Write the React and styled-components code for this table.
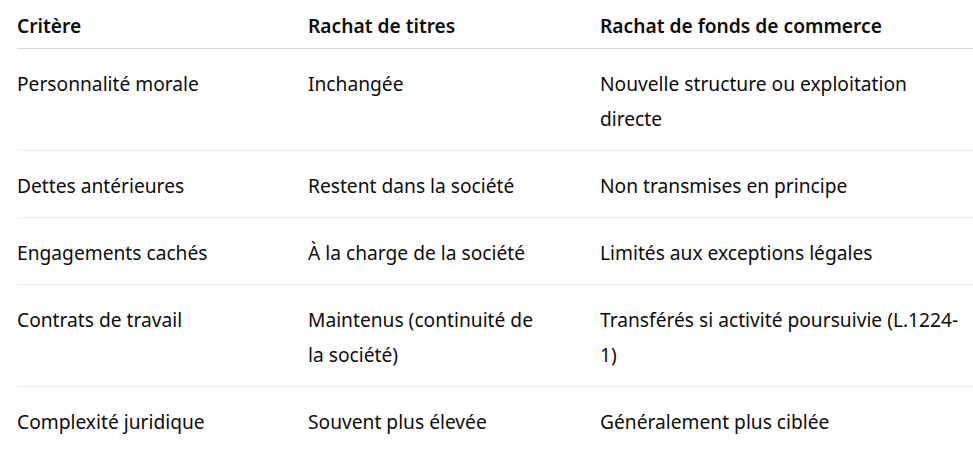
import React from "react";
import styled, { createGlobalStyle } from "styled-components";

const Global = createGlobalStyle`
  html, body { margin: 0; padding: 0; background: #ffffff; }
  body {
    font-family: "Noto Sans", "Open Sans", sans-serif;
    color: #0d0d0d;
    font-size: 19.2px;
    line-height: 35px;
  }
`;

const Table = styled.div`
  margin-left: 17px;
  width: 956px;
`;

const Row = styled.div`
  display: grid;
  grid-template-columns: 283px 292px 381px;
  border-bottom: 1px solid ${(p) => (p.$head ? "#d9d9d9" : p.$last ? "transparent" : "#ececec")};
  padding: ${(p) => (p.$head ? "8px 0 5px" : "17px 0 14px")};
  font-weight: ${(p) => (p.$head ? 600 : 400)};
`;

const pads = ["0 8px 0 0", "0 50px 0 8px", "0 4px 0 8px"];

const Cell = styled.div`
  padding: ${(p) => pads[p.$col]};
  min-width: 0;
`;

const headers = ["Critère", "Rachat de titres", "Rachat de fonds de commerce"];
const rows = [
  ["Personnalité morale", "Inchangée", "Nouvelle structure ou exploitation directe"],
  ["Dettes antérieures", "Restent dans la société", "Non transmises en principe"],
  ["Engagements cachés", "À la charge de la société", "Limités aux exceptions légales"],
  ["Contrats de travail", "Maintenus (continuité de la société)", "Transférés si activité poursuivie (L.1224-1)"],
  ["Complexité juridique", "Souvent plus élevée", "Généralement plus ciblée"],
];

export default function App() {
  return (
    <Table>
      <Global />
      <Row $head>
        {headers.map((h, i) => (
          <Cell key={h} $col={i}>{h}</Cell>
        ))}
      </Row>
      {rows.map((r, ri) => (
        <Row key={ri} $last={ri === rows.length - 1}>
          {r.map((c, i) => (
            <Cell key={i} $col={i}>{c}</Cell>
          ))}
        </Row>
      ))}
    </Table>
  );
}
